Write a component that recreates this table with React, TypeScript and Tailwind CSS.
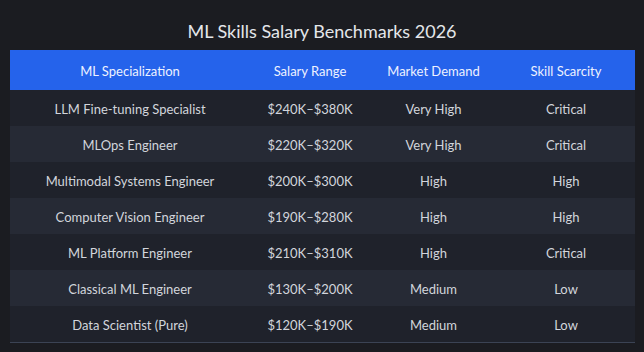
import React from "react";

const rows = [
  ["LLM Fine-tuning Specialist", "$240K–$380K", "Very High", "Critical"],
  ["MLOps Engineer", "$220K–$320K", "Very High", "Critical"],
  ["Multimodal Systems Engineer", "$200K–$300K", "High", "High"],
  ["Computer Vision Engineer", "$190K–$280K", "High", "High"],
  ["ML Platform Engineer", "$210K–$310K", "High", "Critical"],
  ["Classical ML Engineer", "$130K–$200K", "Medium", "Low"],
  ["Data Scientist (Pure)", "$120K–$190K", "Medium", "Low"],
];

export default function App() {
  return (
    <div
      className="w-[644px] h-[352px] bg-[#1b1c21] overflow-hidden"
      style={{ fontFamily: 'Lato, "Noto Sans", sans-serif' }}
    >
      <h1 className="h-[50px] pt-[18px] text-center text-[18px] leading-[26px] text-[#e4e6ea]">
        ML Skills Salary Benchmarks 2026
      </h1>
      <div className="mx-[10px] w-[625px]">
        <div className="grid grid-cols-[240px_120px_127px_138px] h-[40px] pt-[3px] items-center bg-[#2563eb] text-[13px] text-[#eef2ff]">
          <div className="text-center">ML Specialization</div>
          <div className="text-center">Salary Range</div>
          <div className="text-center">Market Demand</div>
          <div className="text-center">Skill Scarcity</div>
        </div>
        {rows.map((r, i) => (
          <div
            key={i}
            className={
              "grid grid-cols-[240px_120px_127px_138px] h-[36px] pt-[3px] items-center text-[13px] text-[#d2d5dc] " +
              (i % 2 === 0 ? "bg-[#1f222b]" : "bg-[#262a35]")
            }
          >
            {r.map((c, j) => (
              <div key={j} className="text-center">
                {c}
              </div>
            ))}
          </div>
        ))}
        <div className="h-px bg-[#3b4354]" />
      </div>
    </div>
  );
}
